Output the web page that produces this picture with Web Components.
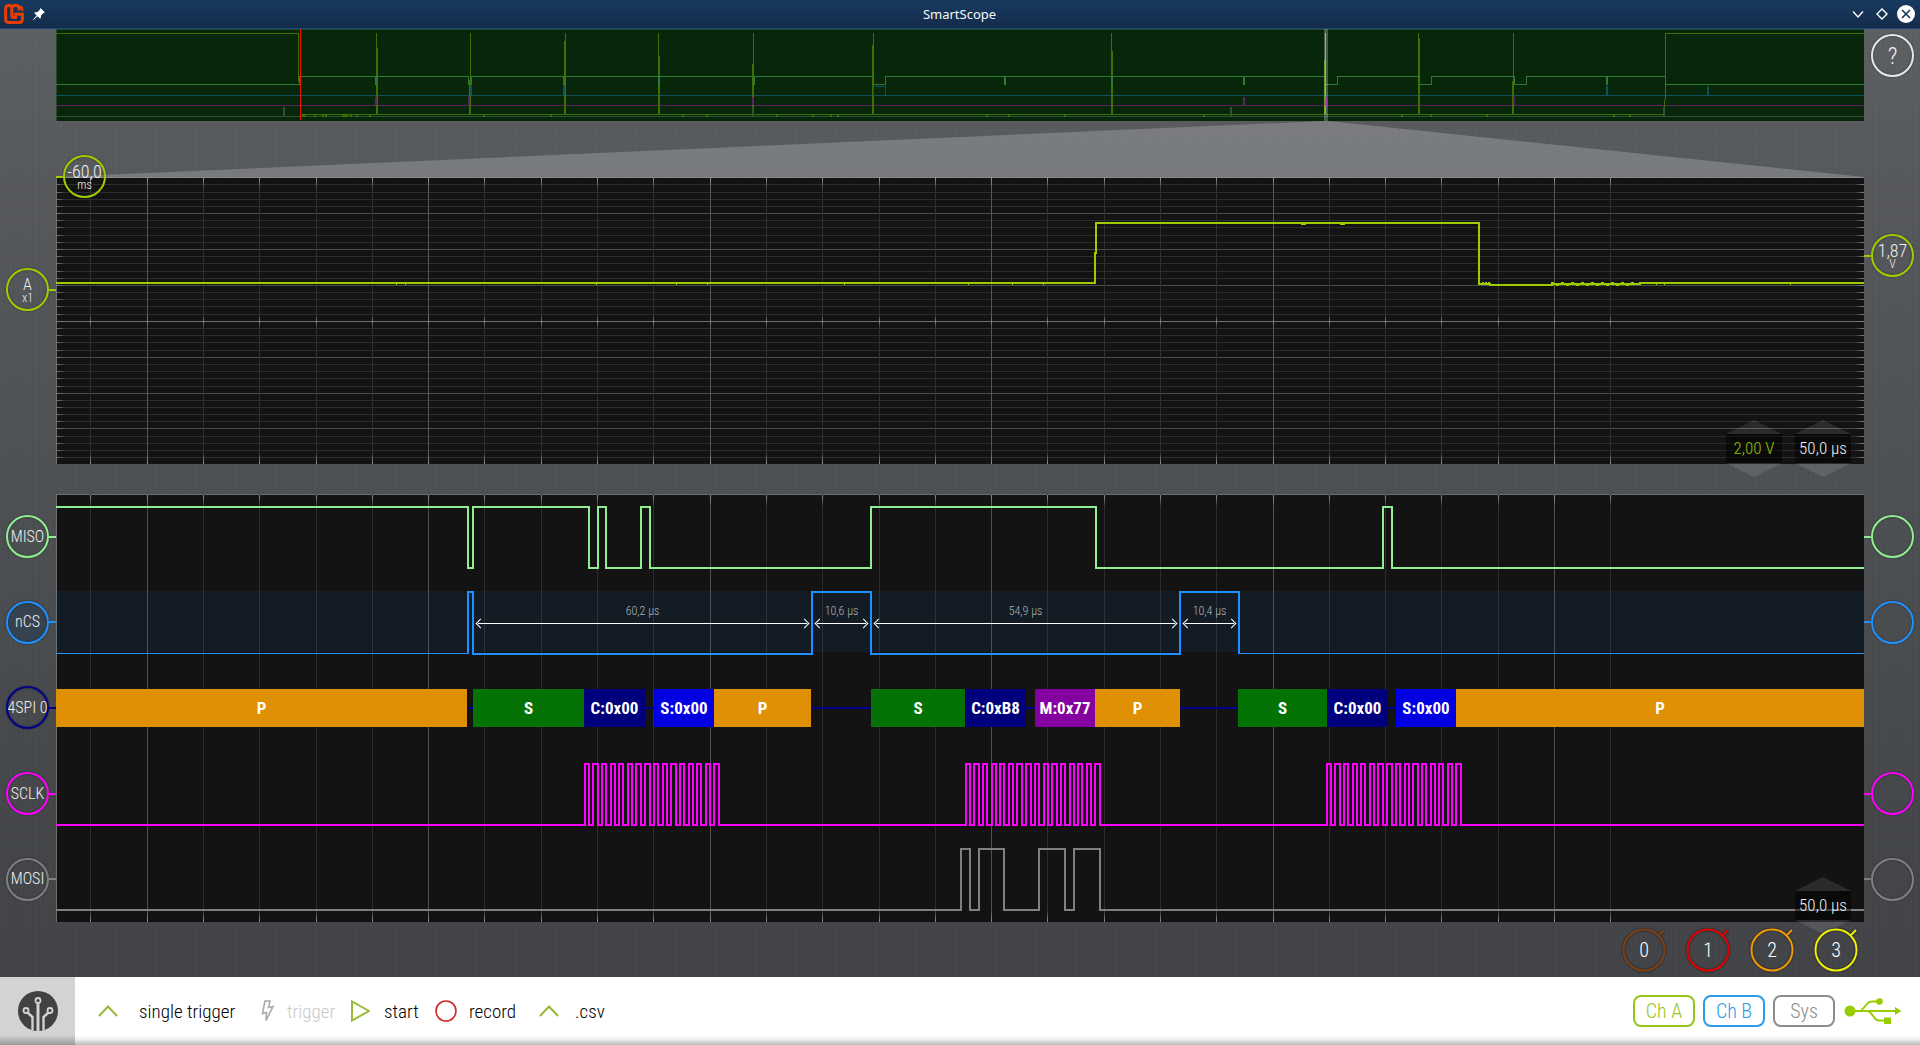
<!DOCTYPE html>
<html lang="en">
<head>
<meta charset="utf-8">
<title>SmartScope</title>
<style>
  html, body { margin: 0; height: 100%; }
  body { background: #414346; font-family: "Roboto Condensed", "Liberation Sans Narrow", Roboto, sans-serif; font-weight: 300; color: #fff; overflow: hidden; }
</style>
</head>
<body>
<scope-window></scope-window>

<script>
const define = (name, render) => customElements.define(name, class extends HTMLElement {
  connectedCallback() {
    if (this.shadowRoot) return;
    const root = this.attachShadow({ mode: "open" });
    const t = document.createElement("template");
    t.innerHTML = "<style>*{box-sizing:border-box}:host{box-sizing:border-box}button{font:inherit;color:inherit;background:none;border:0;padding:0;margin:0}svg{display:block}</style>" + render(this);
    root.append(t.content.cloneNode(true));
  }
});

/* ---- drawing helpers; x and y are window coordinates, moved to the panel origin ---- */
const X0 = 56;
const vlines = [90,147,203,259,316,372,428,484,541,597,653,710,766,822,879,935,991,1047,1104,1160,1216,1273,1329,1385,1441,1498,1554,1610];
const isMajor = i => i % 5 === 1;
const rect = (x, y, w, h, fill) => `<rect x="${x - X0}" y="${y}" width="${w}" height="${h}" fill="${fill}"/>`;
const digital = (start, xs, hi, lo, end) => {
  let up = start, d = `M0 ${up ? hi : lo}`;
  xs.forEach(x => { up = !up; d += `H${x - X0}V${up ? hi : lo}`; });
  return d + `H${end - X0}`;
};
const fades = `<linearGradient id="down" x1="0" y1="0" x2="0" y2="1"><stop offset="0" stop-color="#909090"/><stop offset="1" stop-color="#909090" stop-opacity="0"/></linearGradient>
<linearGradient id="up" x1="0" y1="1" x2="0" y2="0"><stop offset="0" stop-color="#909090"/><stop offset="1" stop-color="#909090" stop-opacity="0"/></linearGradient>
<linearGradient id="mid" x1="0" y1="0" x2="0" y2="1"><stop offset="0" stop-color="#808080" stop-opacity="0"/><stop offset=".5" stop-color="#808080"/><stop offset="1" stop-color="#808080" stop-opacity="0"/></linearGradient>
<linearGradient id="right" x1="0" y1="0" x2="1" y2="0"><stop offset="0" stop-color="#808080"/><stop offset="1" stop-color="#808080" stop-opacity="0"/></linearGradient>
<linearGradient id="left" x1="1" y1="0" x2="0" y2="0"><stop offset="0" stop-color="#808080"/><stop offset="1" stop-color="#808080" stop-opacity="0"/></linearGradient>`;

/* ---- title bar ---- */
define("title-bar", () => `
<style>
  :host { display: grid; grid-template-columns: 1fr auto 1fr; align-items: center; height: 29px; flex: none; padding: 0 5px 0 4px;
    background: linear-gradient(#183a60, #142c4b); border-bottom: 1px solid #1b4a82; font: 13px "Noto Sans", sans-serif; color: #f4f6f8; }
  .left, .right { display: flex; align-items: center; }
  .left { gap: 9px; } .right { justify-content: flex-end; gap: 6px; }
</style>
<div class="left">
  <svg width="20" height="20" viewBox="0 0 20 20" fill="none" stroke="#ea3c00" stroke-width="3"><path d="M1.600 15V4.800Q1.600 1.600 4.600 1.600H5Q7.800 1.600 7.800 4.500V11.500Q7.800 13.500 9.800 13.500H13M7.800 5V4.500Q7.800 1.600 10.800 1.600H12.200Q15.200 1.600 15.200 4.600V6.500M1.600 14.500V15.200Q1.600 18.400 4.800 18.400H15.200Q18.400 18.400 18.400 15.200V10.300H9.800"/><path d="M15 2.500Q18.400 2.500 18.400 5.500V7" stroke-width="2"/></svg>
  <svg width="12" height="12" viewBox="0 0 12 12"><path d="M7.500 0L12 4.500L10.500 5L8 7.500L7.800 10.200L6.800 10.600L4.500 8.300L.6 12L0 11.400L3.700 7.500L1.400 5.200L2 4.200L4.600 4L7 1.500Z" fill="#fff"/></svg>
</div>
<span>SmartScope</span>
<div class="right">
  <button aria-label="Minimize"><svg width="18" height="18" viewBox="0 0 18 18"><path d="M4 6.500L9 12L14 6.500" fill="none" stroke="#fff" stroke-width="1.400"/></svg></button>
  <button aria-label="Maximize"><svg width="18" height="18" viewBox="0 0 18 18"><path d="M9 4L14 9L9 14L4 9Z" fill="none" stroke="#fff" stroke-width="1.400"/></svg></button>
  <button aria-label="Close"><svg width="18" height="18" viewBox="0 0 18 18"><circle cx="9" cy="9" r="9" fill="#fff"/><path d="M5 5L13 13M13 5L5 13" stroke="#16335a" stroke-width="1.600"/></svg></button>
</div>`);

/* ---- round channel handle, with its connector on one side ---- */
define("channel-knob", el => `
<style>
  :host { display: flex; align-items: center; width: 56px; color: #f0f0f0; }
  :host([side="left"]) { padding-left: 6px; }
  :host([side="right"]) { flex-direction: row-reverse; padding-right: 6px; }
  i { flex: 1; height: 2px; background: var(--c); }
  :host([plain]) i { background: none; }
  button { flex: none; width: 43px; height: 43px; border: 2px solid var(--c); border-radius: 50%; background: var(--fill, transparent);
    box-shadow: 0 0 2px rgba(0,0,0,.5), inset 0 0 2px rgba(0,0,0,.5); display: flex; flex-direction: column; align-items: center; justify-content: center;
    line-height: 16px; font-size: var(--size, 16px); white-space: nowrap; }
  :host([sub]) button { padding-top: 3px; line-height: 14px; }
  small { font-size: 12px; line-height: 12px; }
</style>
<button aria-label="${el.getAttribute("name") || el.textContent}"><span><slot></slot></span>${el.hasAttribute("sub") ? `<small>${el.getAttribute("sub")}</small>` : ""}</button><i></i>`);

/* ---- value box with up and down arrows ---- */
define("step-control", () => `
<style>
  :host { display: flex; flex-direction: column; width: 56px; color: #f4f4f4; font-size: 17px; }
  button { height: 14px; background: rgba(255,255,255,.1); }
  .up { clip-path: polygon(50% 0, 100% 100%, 0 100%); } .down { clip-path: polygon(0 0, 100% 0, 50% 100%); }
  output { height: 29px; line-height: 29px; text-align: center; background: rgba(0,0,0,.5); white-space: nowrap; }
</style>
<button class="up" aria-label="Increase"></button><output><slot></slot></output><button class="down" aria-label="Decrease"></button>`);

/* ---- overview strip ---- */
define("overview-strip", () => {
  const O = 29, v = (x, y1, y2, c, w = 1) => rect(x, y1 - O, w, y2 - y1, c);
  const olive = "#3d7004", teal = "#0d525c", plum = "#602064", moss = "#2f5231", green = "#317a36";
  let s = "";
  s += rect(56, 116 - O, 1808, 1, moss) + rect(56, 105 - O, 1808, 1, plum) + rect(56, 95 - O, 1808, 1, teal);
  s += rect(56, 33 - O, 243, 1, olive) + v(298, 33, 82, olive) + rect(300, 114 - O, 1365, 1, olive) + rect(1665, 33 - O, 199, 1, olive) + v(1665, 33, 100, olive) + v(1664, 100, 114, olive);
  [302,304,314,322,325,342,344,346,350,356,369,483,550,682,706,776,812,830,837,986,1008,1064,1203,1401,1430,1486,1613,1629].forEach(x => s += v(x, 114, 117, olive, 2));
  [[376,48,1],[470,80,-1],[565,41,-1],[658,56,1],[753,64,-1],[873,45,-1],[1111,51,1],[1418,38,1],[1513,81,-1]].forEach(([x, y, d]) => s += v(x, 33, 114, olive) + v(x + d, y, 114, olive));
  [284,753,1231,1664].forEach(x => s += v(x - 1, 107, 116, moss, 2));
  [376,469,753,1244,1514].forEach(x => s += v(x - 1, 97, 105, plum, 2));
  [471,564,1607,1708].forEach(x => s += v(x - 1, 86, 95, teal, 2));
  s += `<path d="M817.500 66.500V57.500H829.500V66.500" fill="none" stroke="${teal}"/>`;
  s += `<path d="M0 55.500H243.500V47.500H319.500V55.500H320.500V47.500H412.500V55.500H415.500V47.500H507.500V55.500H509.500V47.500H602.500V55.500H603.500V47.500H697.500V55.500H698.500V47.500H817.500V55.500H829.500V47.500H948.500V55.500H949.500V47.500H1055.500V55.500H1056.500V47.500H1187.500V55.500H1188.500V47.500H1269.500V55.500H1281.500V47.500H1363.500V55.500H1375.500V47.500H1458.500V55.500H1470.500V47.500H1550.500V55.500H1551.500V47.500H1609.500V55.500H1808" fill="none" stroke="${green}"/>`;
  s += v(300, 29, 120, "#f01000");
  s += rect(1324, 0, 4, 92, "rgba(255,255,255,.25)") + v(1325, 33, 114, "#8cc81e") + v(1324, 60, 114, "#6f9e2a") + v(1325, 97, 106, "#b43cc0", 2);
  return `<style>:host{display:block;background:#08260a;border-top:1px solid #24482a;border-left:1px solid #24482a;min-width:0}svg{width:calc(100% + 1px);height:92px;margin:-1px 0 0 -1px}</style>
  <svg viewBox="0 0 1808 92" preserveAspectRatio="none" shape-rendering="crispEdges" aria-hidden="true">${s}</svg>`;
});

/* ---- funnel between overview and main view ---- */
define("zoom-funnel", () => `<style>:host{display:block}svg{width:100%;height:56px}</style>
<svg viewBox="0 0 1808 56" preserveAspectRatio="none" aria-hidden="true"><path d="M1268 0H1272L1808 56H0Z" fill="rgba(255,255,255,.2)"/></svg>`);

/* ---- analog panel ---- */
define("analog-panel", () => {
  const O = 177;
  const ys = [184,192,199,206,213,220,227,235,242,249,256,263,271,278,285,292,299,306,314,321,328,335,342,350,357,364,371,378,386,393,400,407,414,421,428,436,443,450,457];
  let s = "";
  ys.forEach((y, i) => { const m = (i + 1) % 5 === 0; s += rect(56, y - O, 1808, 1, y === 321 ? "#6c6c6c" : m ? "#4c4c4c" : "#2d2d2d") + rect(56, y - O, 9, 1, "url(#right)") + rect(1855, y - O, 9, 1, "url(#left)"); });
  vlines.forEach((x, i) => { s += rect(x, 0, 1, 287, isMajor(i) ? "#565656" : "#2f2f2f") + rect(x, 1, 1, 12, "url(#down)") + rect(x, 138, 1, 13, "url(#mid)") + rect(x, 275, 1, 12, "url(#up)"); });
  s += rect(56, 0, 1, 287, "#6e6e6e");
  const bumps = [396,405,596,676,707,844,968,1012,1043,1656,1664,1790].map(x => rect(x, 107, 1, 1, "#9fcc00")).join("") + [1301,1340].map(x => rect(x, 47, 5, 1, "#9fcc00")).join("");
  let noise = "";
  for (let x = 1482; x < 1490; x += 3) noise += rect(x, 105, 2, 2, "#9fcc00");
  for (let x = 1546; x < 1632; x += 5) noise += rect(x, x % 2 ? 105 : 108, 3, 1, "#9fcc00");
  s += `<path d="M0 106H1039V76H1040V46H1423V107H1434V108H1496V107H1584V106H1808" fill="none" stroke="#9fcc00" stroke-width="2"/>` + bumps + noise;
  return `<style>
    :host { display: block; position: relative; background: #131313; border-top: 1px solid #8a8b8d; min-width: 0; }
    svg { position: absolute; inset: -1px 0 0; width: 100%; height: calc(100% + 1px); }
    .cursor { position: absolute; left: 0; top: -23px; --size: 18px; }
    .steps { position: absolute; right: 13px; bottom: -13px; display: flex; gap: 13px; }
    .volt { color: #99c400; }
  </style>
  <svg viewBox="0 0 1808 287" preserveAspectRatio="none" shape-rendering="crispEdges" aria-hidden="true"><defs>${fades}</defs>${s}<rect width="1808" height="1" fill="#8a8b8d"/></svg>
  <channel-knob class="cursor" side="right" sub="ms" style="--c:#9fcc00;padding:0;width:50px">-60,0</channel-knob>
  <div class="steps"><step-control class="volt">2,00 V</step-control><step-control>50,0 µs</step-control></div>`;
});

/* ---- protocol decoder lane: segments share the width in proportion to their time ---- */
define("decoder-lane", () => {
  const segs = [[411,"P","#e09005"],[6],[111,"S","#047204"],[61,"C:0x00","#00007c"],[9],[60,"S:0x00","#0000e0"],[97,"P","#e09005"],[60],[94,"S","#047204"],[61,"C:0xB8","#00007c"],[9],[60,"M:0x77","#8500a0"],[85,"P","#e09005"],[58],[89,"S","#047204"],[61,"C:0x00","#00007c"],[8],[60,"S:0x00","#0000e0"],[408,"P","#e09005"]];
  return `<style>
    :host { display: flex; align-items: center; font-weight: 700; font-size: 17px; color: #fff; }
    span { flex: var(--n) 1 0; min-width: 0; height: 38px; line-height: 38px; text-align: center; background: var(--c); white-space: nowrap; }
    i { flex: var(--n) 1 0; height: 2px; background: #00008b; }
  </style>` + segs.map(([n, t, c]) => t ? `<span style="--n:${n};--c:${c}">${t}</span>` : `<i style="--n:${n}"></i>`).join("");
});

/* ---- pulse-width lane ---- */
define("pulse-lane", () => {
  const segs = [[417],[339,"60,2 µs"],[59,"10,6 µs"],[309,"54,9 µs"],[59,"10,4 µs"],[625]];
  return `<style>
    :host { display: flex; align-items: center; font-size: 12px; color: #b4b4b4; }
    div { flex: var(--n) 1 0; min-width: 0; text-align: center; white-space: nowrap; }
    span { display: block; height: 16px; line-height: 16px; margin-top: -16px; }
    p { margin: 0; padding: 0 4px; height: 9px; display: flex; align-items: center; }
    p::before, p::after { content: ""; width: 6px; height: 6px; border: solid #fff; transform: rotate(45deg); flex: none; }
    p::before { border-width: 0 0 1px 1px; margin-right: -6px; } p::after { border-width: 1px 1px 0 0; margin-left: -6px; }
    b { flex: 1; height: 1px; background: #fff; }
  </style>` + segs.map(([n, t]) => `<div style="--n:${n}">${t ? `<span>${t}</span><p><b></b></p>` : ""}</div>`).join("");
});

/* ---- digital panel ---- */
define("digital-panel", () => {
  const burst = [585,589,593,598,602,606,611,615,619,623,628,632,636,641,645,650,654,658,663,667,671,676,680,684,689,693,697,701,706,710,714,719];
  const clock = [...burst, ...burst.map(x => x + 381), ...burst.map(x => x + 742)];
  const wave = (d, c) => `<path d="${d}" fill="none" stroke="${c}" stroke-width="2"/>`;
  let s = vlines.map((x, i) => rect(x, 0, 1, 428, isMajor(i) ? "#505050" : "#2d2d2d") + rect(x, 1, 1, 12, "url(#down)") + rect(x, 416, 1, 12, "url(#up)")).join("");
  s += rect(56, 0, 1, 428, "#6e6e6e") + rect(56, 97, 1808, 61, "rgba(30,144,255,.08)");
  s += wave(digital(true, [468,473,589,598,606,641,650,871,1096,1383,1392], 13, 74, 1864), "#90ee90");
  s += rect(56, 159, 412, 1, "#1e90ff") + rect(1239, 159, 625, 1, "#1e90ff");
  s += `<path d="M412 160V98H417V160H756V98H815V160H1124V98H1183V160" fill="none" stroke="#1e90ff" stroke-width="2"/>`;
  s += wave(digital(false, clock, 270, 331, 1864), "#ff00ff");
  s += wave(digital(false, [961,970,979,1004,1039,1065,1074,1100], 355, 416, 1864), "#808080");
  return `<style>
    :host { display: block; position: relative; background: #131313; border-top: 1px solid #6e6e6e; min-width: 0; }
    svg { position: absolute; inset: -1px 0 0; width: 100%; height: calc(100% + 1px); }
    .lanes { position: relative; height: 100%; display: grid; grid-template-rows: repeat(5, 1fr); }
    step-control { position: absolute; right: 13px; bottom: -12px; }
  </style>
  <svg viewBox="0 0 1808 428" preserveAspectRatio="none" shape-rendering="crispEdges" aria-hidden="true"><defs>${fades}</defs>${s}</svg>
  <div class="lanes"><div></div><pulse-lane></pulse-lane><decoder-lane></decoder-lane></div>
  <step-control>50,0 µs</step-control>`;
});

/* ---- measurement slots 0..3 ---- */
define("memory-button", el => `
<style>
  :host { display: block; }
  button { position: relative; display: grid; place-items: center; width: 48px; height: 44px; color: #fff; font-size: 20px; }
  svg { grid-area: 1/1; filter: drop-shadow(0 0 1px rgba(0,0,0,.6)); } span { grid-area: 1/1; width: 44px; justify-self: start; }
</style>
<button><svg width="48" height="44" viewBox="0 0 48 44" fill="none" stroke="${el.getAttribute("color")}" stroke-width="2"><circle cx="22" cy="22" r="20.500"/><path d="M37 7L42 2"/></svg><span><slot></slot></span></button>`);

/* ---- bottom tool bar ---- */
define("tool-bar", () => `
<style>
  :host { display: flex; height: 68px; flex: none; color: #000; font-size: 20px; background: linear-gradient(transparent 58px, rgba(0,0,0,.05) 62px, rgba(0,0,0,.28)), #fff; }
  .logo { width: 75px; background: linear-gradient(transparent 58px, rgba(0,0,0,.28)), #d3d3d3; display: grid; place-items: center; }
  .actions { display: flex; align-items: center; padding-left: 23px; font-size: 19px; }
  .actions button { display: flex; align-items: center; height: 48px; white-space: nowrap; }
  .single { gap: 21px; width: 163px; } .trig { gap: 13px; width: 90px; color: #c8c8c8 !important; } .start { gap: 14px; width: 84px; } .rec { gap: 12px; width: 104px; } .csv { gap: 16px; }
  .right { margin-left: auto; display: flex; align-items: center; gap: 8px; padding-right: 18px; }
  .right button { width: 62px; height: 32px; border: 2px solid var(--c); border-radius: 8px; color: var(--c); line-height: 28px; }
</style>
<button class="logo" aria-label="Menu"><svg width="40" height="40" viewBox="0 0 40 40"><defs><clipPath id="disc"><circle cx="20" cy="20" r="20"/></clipPath></defs><circle cx="20" cy="20" r="20" fill="#424242"/><g clip-path="url(#disc)" fill="none" stroke="#d3d3d3" stroke-width="1.800"><circle cx="20" cy="9.500" r="2.500"/><path stroke-width="3" d="M20 12V40"/><circle cx="8" cy="19.500" r="2.500"/><circle cx="32" cy="19.500" r="2.500"/><path stroke-width="2.400" d="M9.500 21.500L14.500 26V40M30.500 21.500L25.500 26V40"/></g></svg></button>
<div class="actions">
  <button class="single"><svg width="20" height="12" viewBox="0 0 20 12"><path d="M1 11L10 1.500L19 11" fill="none" stroke="#98b838" stroke-width="2"/></svg>single trigger</button>
  <button class="trig" disabled><svg width="13" height="22" viewBox="0 0 13 22"><path d="M4 1H9L7.500 7.500L12 6.500L5 20.500L5.500 12.500L1.500 13.500Z" fill="none" stroke="#aaa" stroke-width="1.600"/></svg>trigger</button>
  <button class="start"><svg width="19" height="22" viewBox="0 0 19 22"><path d="M1 1.500V20.500L18 11Z" fill="none" stroke="#98b838" stroke-width="2"/></svg>start</button>
  <button class="rec"><svg width="22" height="22" viewBox="0 0 22 22"><circle cx="11" cy="11" r="10" fill="none" stroke="#d02828" stroke-width="1.600"/></svg>record</button>
  <button class="csv"><svg width="20" height="12" viewBox="0 0 20 12"><path d="M1 11L10 1.500L19 11" fill="none" stroke="#98b838" stroke-width="2"/></svg>.csv</button>
</div>
<div class="right">
  <button style="--c:#98c41e">Ch A</button><button style="--c:#2a9be8">Ch B</button><button style="--c:#8c8c8c">Sys</button>
  <svg width="59" height="28" viewBox="0 0 59 28" fill="#99cc00" role="img" aria-label="USB connected"><circle cx="7" cy="14" r="5.500"/><path d="M10 13H52V10L58.500 14L52 18V15H10Z"/><path d="M17 14.500Q20 12 24 7Q26 4.500 29 4.500H36M26 14.500Q28 16 31 20Q33 23.500 36 23.500H42" fill="none" stroke="#99cc00" stroke-width="2"/><circle cx="36.500" cy="4.500" r="3.300"/><path d="M41 20.500H48V27H41Z"/></svg>
</div>`);

/* ---- window ---- */
define("scope-window", () => `
<style>
  :host { display: flex; flex-direction: column; height: 100vh;
    background: repeating-linear-gradient(90deg, rgba(255,255,255,.012) 0 2px, transparent 2px 5px), repeating-linear-gradient(rgba(0,0,0,.02) 0 1px, transparent 1px 4px), linear-gradient(#5d6064, #56585b 18%, #4d5053 48%, #434548 82%, #414346); }
  .row { display: grid; grid-template-columns: 56px minmax(0, 1fr) 56px; flex: none; }
  .over { height: 92px; } .fun { height: 56px; }
  .analog { flex: 287 1 0; } .digital { flex: 428 1 0; margin-top: 30px; }
  .over channel-knob { margin-top: 5px; --c: #e6e6e6; --size: 24px; align-self: start; }
  .rail { display: flex; flex-direction: column; }
  .analog channel-knob { --c: #9fcc00; }
  .a { padding-top: 91px; } .trigger { padding-top: 57px; --size: 18px; }
  .digital .rail { display: grid; grid-template-rows: repeat(5, 1fr); align-items: center; }
  .memory { display: flex; justify-content: flex-end; align-items: center; gap: 16px; height: 55px; flex: none; padding-right: 58px; }
</style>
<title-bar></title-bar>
<div class="row over"><div></div><overview-strip></overview-strip><channel-knob side="right" plain>?</channel-knob></div>
<div class="row fun"><div></div><zoom-funnel></zoom-funnel></div>
<div class="row analog">
  <div class="rail a"><channel-knob side="left" sub="x1">A</channel-knob></div>
  <analog-panel></analog-panel>
  <div class="rail trigger"><channel-knob side="right" sub="V">1,87</channel-knob></div>
</div>
<div class="row digital">
  <div class="rail">
    <channel-knob side="left" style="--c:#90ee90">MISO</channel-knob>
    <channel-knob side="left" style="--c:#1e90ff;--fill:#36424f">nCS</channel-knob>
    <channel-knob side="left" style="--c:#00008b">4SPI 0</channel-knob>
    <channel-knob side="left" style="--c:#ff00ff">SCLK</channel-knob>
    <channel-knob side="left" style="--c:#808080">MOSI</channel-knob>
  </div>
  <digital-panel></digital-panel>
  <div class="rail">
    <channel-knob side="right" name="MISO trigger" style="--c:#90ee90"></channel-knob>
    <channel-knob side="right" name="nCS trigger" style="--c:#1e90ff"></channel-knob>
    <div></div>
    <channel-knob side="right" name="SCLK trigger" style="--c:#ff00ff"></channel-knob>
    <channel-knob side="right" name="MOSI trigger" style="--c:#808080"></channel-knob>
  </div>
</div>
<div class="memory"><memory-button color="#7d4013">0</memory-button><memory-button color="#e60000">1</memory-button><memory-button color="#f09a00">2</memory-button><memory-button color="#f0f000">3</memory-button></div>
<tool-bar></tool-bar>`);
</script>
</body>
</html>
